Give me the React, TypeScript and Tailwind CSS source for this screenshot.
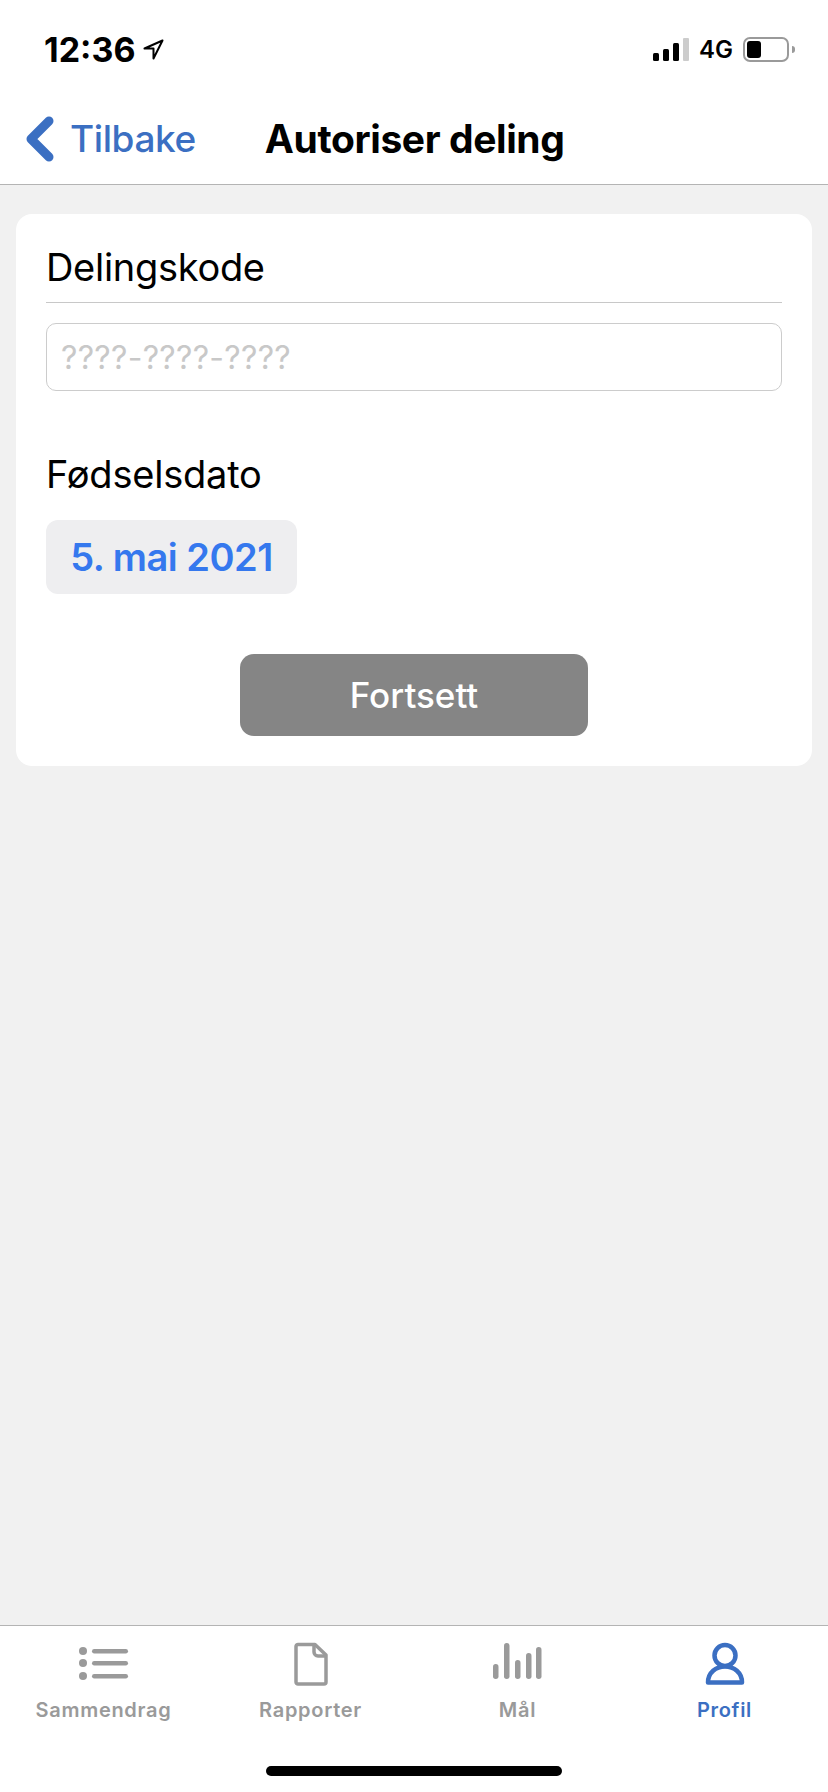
import React from "react";

const ListIcon = () => (
  <svg width="50" height="44" viewBox="0 0 50 44" className="text-[#9a9a9a]" fill="currentColor">
    <circle cx="4" cy="9" r="4" />
    <circle cx="4" cy="21" r="4" />
    <circle cx="4" cy="34" r="4" />
    <rect x="13" y="7" width="36" height="4.5" rx="2.2" />
    <rect x="13" y="19" width="36" height="4.5" rx="2.2" />
    <rect x="13" y="32" width="36" height="4.5" rx="2.2" />
  </svg>
);

const DocIcon = () => (
  <svg width="34" height="44" viewBox="0 0 34 44" fill="none" stroke="#9a9a9a" strokeWidth="3.5" strokeLinejoin="round">
    <path d="M4 2.5h17L32 13v27a2 2 0 0 1-2 2H4a2 2 0 0 1-2-2V4.500a2 2 0 0 1 2-2z" />
    <path d="M20 2.500V10a4 4 0 0 0 4 4h8" />
  </svg>
);

const BarsIcon = () => (
  <svg width="50" height="44" viewBox="0 0 50 44" fill="#9a9a9a">
    <rect x="0" y="22" width="5.500" height="15" rx="2.700" />
    <rect x="11" y="1" width="5.500" height="36" rx="2.700" />
    <rect x="22" y="18" width="5.500" height="19" rx="2.700" />
    <rect x="33" y="11" width="5.500" height="26" rx="2.700" />
    <rect x="43" y="5" width="5.500" height="32" rx="2.700" />
  </svg>
);

const PersonIcon = () => (
  <svg width="40" height="44" viewBox="0 0 40 44" fill="none" stroke="#3b6fc2" strokeWidth="4.5">
    <circle cx="20" cy="13.500" r="10.500" />
    <path d="M3 40.500c0-10 8-16 17-16s17 6 17 16z" strokeLinejoin="round" />
  </svg>
);

const tabs = [
  { label: "Sammendrag", icon: <ListIcon />, active: false },
  { label: "Rapporter", icon: <DocIcon />, active: false },
  { label: "Mål", icon: <BarsIcon />, active: false },
  { label: "Profil", icon: <PersonIcon />, active: true },
];

const StatusBar = () => (
  <div className="flex h-[99px] items-center justify-between pl-[44px] pr-[33px]">
    <div className="flex items-center gap-[8px]">
      <span className="text-[34px] leading-none font-bold text-black">12:36</span>
      <svg width="21" height="21" viewBox="0 0 21 21" fill="none" stroke="black" strokeWidth="2" strokeLinejoin="round">
        <path d="M19.500 1.500L1.500 9.500h9v10z" />
      </svg>
    </div>
    <div className="flex items-center">
      <svg width="36" height="24" viewBox="0 0 36 24" className="mr-[10px]">
        <rect x="0" y="15" width="6" height="8" rx="1.500" fill="black" />
        <rect x="10" y="11" width="6" height="12" rx="1.500" fill="black" />
        <rect x="20" y="5" width="6" height="18" rx="1.500" fill="black" />
        <rect x="30" y="0" width="6" height="23" rx="1" fill="#cccccc" />
      </svg>
      <span className="mr-[10px] text-[24px] leading-none font-semibold text-black">4G</span>
      <div className="flex items-center">
        <div className="flex h-[25px] w-[46px] rounded-[7px] border-2 border-[#9a9a9a] p-[2px]">
          <div className="w-[14px] rounded-[3px] bg-black" />
        </div>
        <div className="ml-[3px] h-[7px] w-[3px] rounded-r-full bg-[#9a9a9a]" />
      </div>
    </div>
  </div>
);

const NavBar = () => (
  <div className="relative flex h-[86px] items-center border-b border-[#b4b4b4] bg-white pb-[6px]">
    <div className="flex items-center pl-[25px]">
      <svg width="30" height="46" viewBox="0 0 30 46" fill="none" stroke="#3b6fc2" strokeWidth="9" strokeLinecap="round" strokeLinejoin="round">
        <path d="M24 5L6 23l18 18" />
      </svg>
      <span className="ml-[15px] text-[37px] leading-none font-medium tracking-[-0.4px] text-[#3b6fc2]">Tilbake</span>
    </div>
    <span className="ml-[69px] text-[39px] leading-none font-bold tracking-[-0.4px] text-black">Autoriser deling</span>
  </div>
);

const ShareCard = () => (
  <div className="mx-[16px] mt-[29px] rounded-[16px] bg-white px-[30px] pt-[30px] pb-[30px]">
    <div className="border-b border-[#c8c8c8] pb-[12px] text-[38px] leading-[46px] tracking-[-0.3px] text-black">Delingskode</div>
    <input
      readOnly
      placeholder="????-????-????"
      className="mt-[20px] block h-[68px] w-full rounded-[10px] border border-[#cccccc] px-[14px] text-[32px] tracking-[0.3px] placeholder:text-[#c8c8c8]"
    />
    <div className="mt-[60px] text-[38px] leading-[46px] tracking-[-0.2px] text-black">Fødselsdato</div>
    <div className="mt-[23px] flex h-[74px] w-[251px] items-center justify-center rounded-[12px] bg-[#eeeef0] text-[38px] font-semibold tracking-[-0.5px] text-[#3578ee]">5. mai 2021</div>
    <div className="mt-[60px] flex justify-center">
      <button className="h-[82px] w-[348px] rounded-[14px] bg-[#858585] text-[35px] leading-[78px] font-medium text-white">Fortsett</button>
    </div>
  </div>
);

const TabBar = () => (
  <div className="relative h-[167px] border-t border-[#b4b4b4] bg-white">
    <div className="grid grid-cols-4 pt-[15px]">
      {tabs.map((t) => (
        <div key={t.label} className="flex flex-col items-center">
          <div className="flex h-[46px] items-center justify-center">{t.icon}</div>
          <span
            className={`mt-[9px] text-[20px] leading-[28px] font-semibold tracking-[0.7px] ${t.active ? "text-[#3b6fc2]" : "text-[#9a9a9a]"}`}
          >
            {t.label}
          </span>
        </div>
      ))}
    </div>
    <div className="absolute bottom-[16px] left-[266px] h-[10px] w-[296px] rounded-full bg-black" />
  </div>
);

export default function App() {
  return (
    <div className="flex h-[1792px] w-[828px] flex-col overflow-hidden bg-[#f1f1f1] font-['Inter',sans-serif]">
      <div className="bg-white">
        <StatusBar />
        <NavBar />
      </div>
      <div className="flex-1">
        <ShareCard />
      </div>
      <TabBar />
    </div>
  );
}
